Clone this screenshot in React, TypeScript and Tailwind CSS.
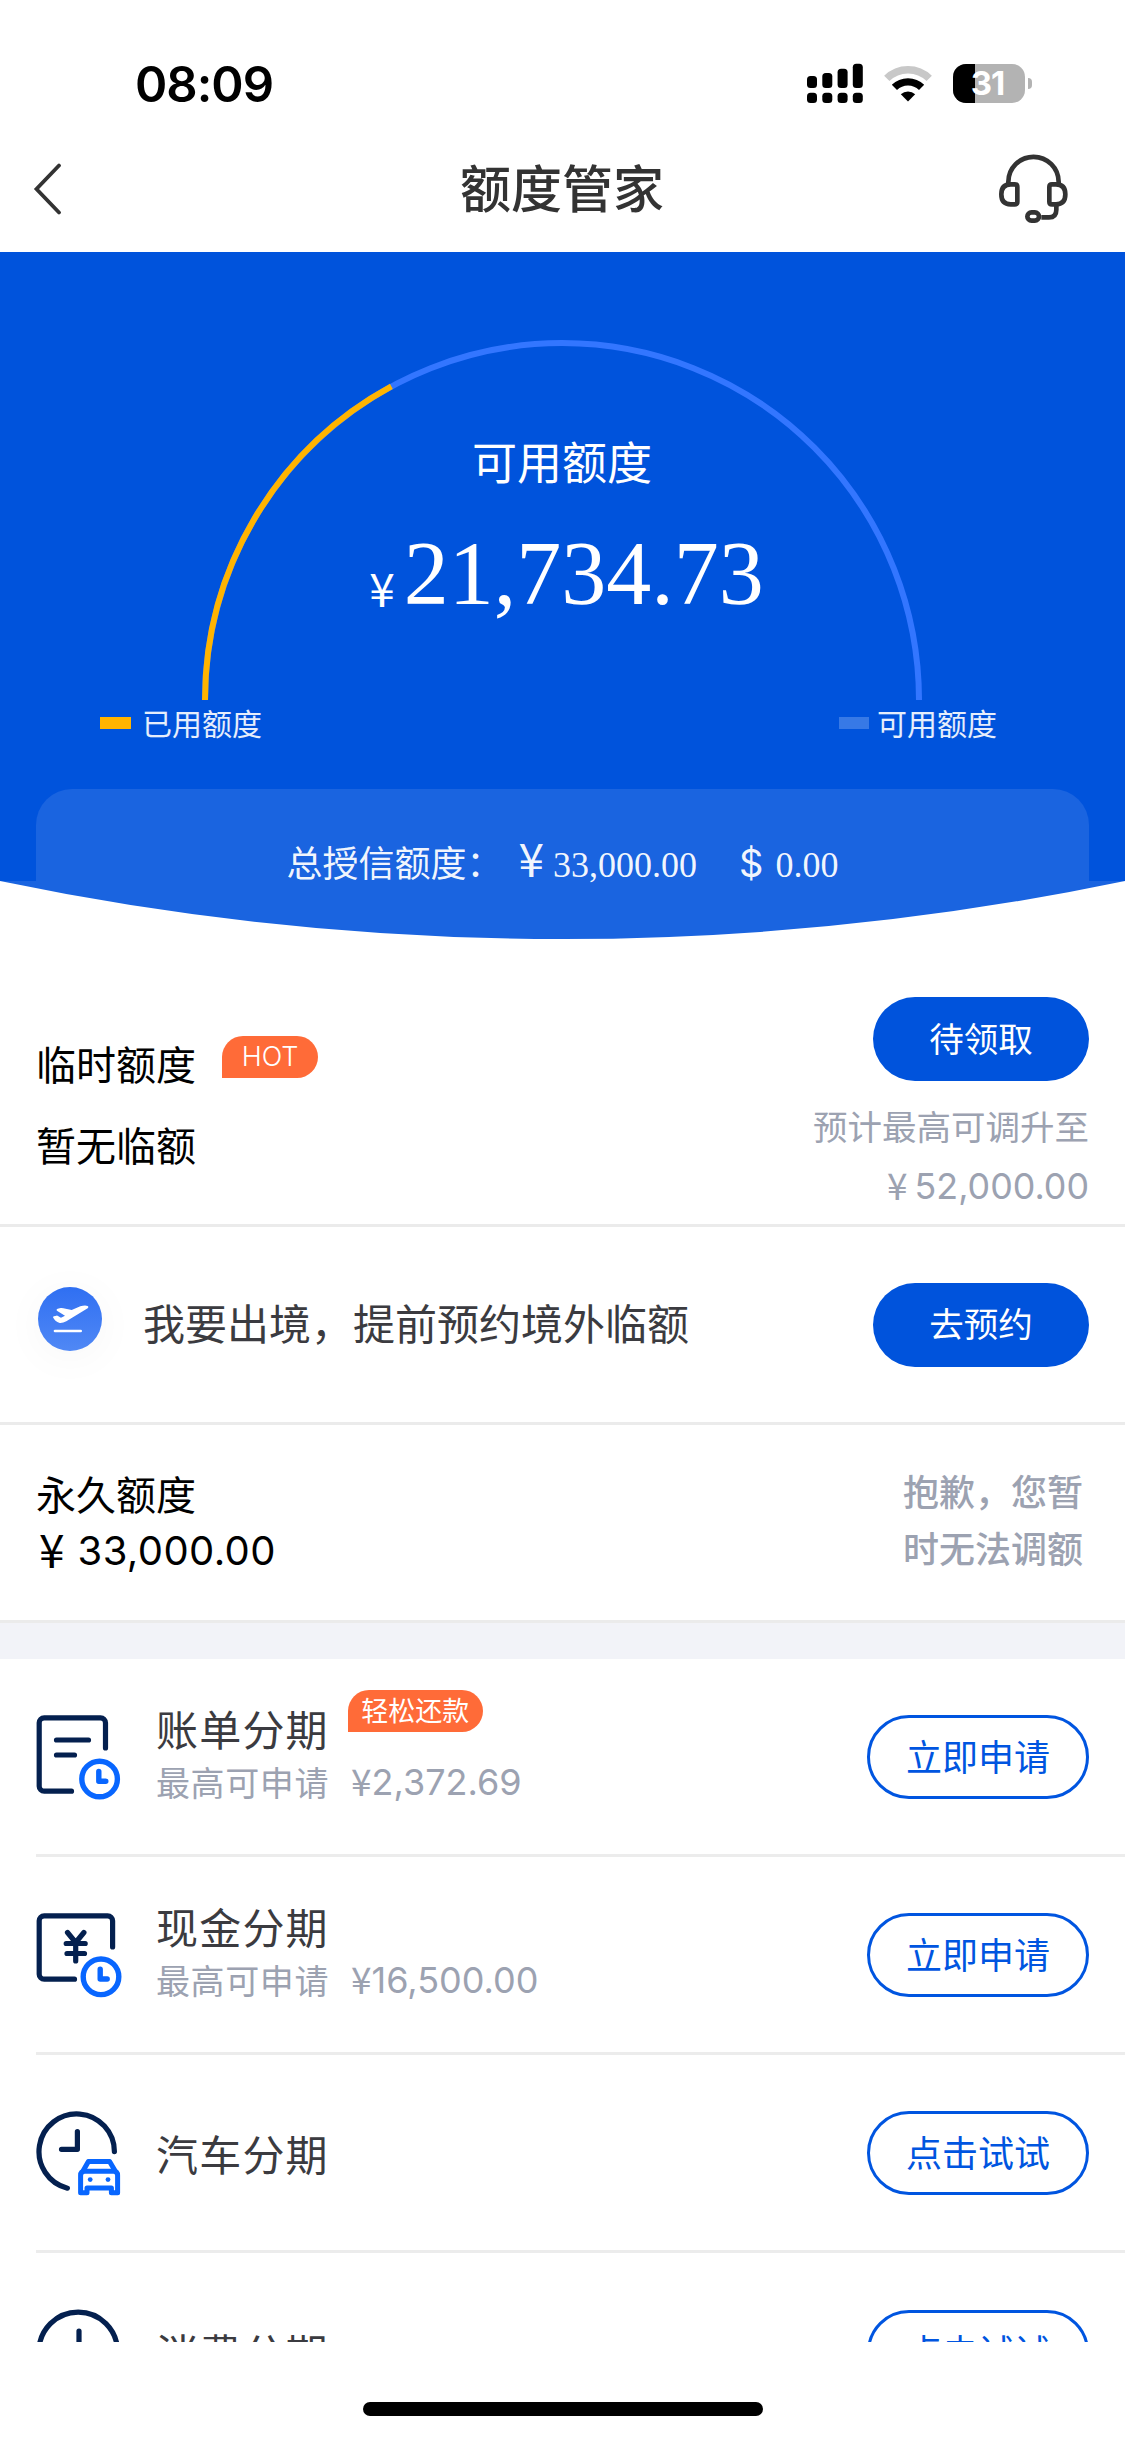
import type { ReactNode } from 'react'

interface Installment {
  id: string
  title: string
  amount?: string
  badge?: string
  action: string
  icon: ReactNode
}

const TOTAL_LIMIT = 33000
const AVAILABLE_LIMIT = 21734.73

const NAVY = '#04204f'
const BLUE = '#0866ff'

function SmallClock({ cx, cy }: { cx: number; cy: number }) {
  return (
    <g stroke={BLUE} strokeWidth="5.4">
      <circle cx={cx} cy={cy} r="17.8" />
      <path d={`M${cx - 0.8} ${cy - 7.5}v9.7h7`} />
    </g>
  )
}

function IconBase({ children }: { children: ReactNode }) {
  return (
    <svg
      className="h-[84px] w-[84px] shrink-0 overflow-visible"
      viewBox="0 0 84 84"
      fill="none"
      stroke={NAVY}
      strokeWidth="5.2"
      strokeLinecap="round"
      strokeLinejoin="round"
    >
      {children}
    </svg>
  )
}

function BillIcon() {
  return (
    <IconBase>
      <path d="M35.5 76.2H8.2a5 5 0 0 1-5-5V7.8a5 5 0 0 1 5-5h56.3a5 5 0 0 1 5 5V33" />
      <path d="M20.5 25h32M20.5 40h18" />
      <SmallClock cx={63.6} cy={64} />
    </IconBase>
  )
}

function CashIcon() {
  return (
    <IconBase>
      <path d="M38.5 66.2H8.2a5 5 0 0 1-5-5V7.8a5 5 0 0 1 5-5h63.4a5 5 0 0 1 5 5V34" />
      <path d="M31.5 19.5l8.2 10 8.2-10M39.7 30v18M30.2 30.5h19M31 40.5h17.5" />
      <SmallClock cx={65} cy={63.8} />
    </IconBase>
  )
}

function CarIcon() {
  return (
    <IconBase>
      <path d="M78.4 40.6A37.7 37.7 0 1 0 31.4 77.2" />
      <path d="M41.4 20.5v17.8H25.5" />
      <g stroke={BLUE} strokeWidth="5">
        <path d="M47 60l5.4-9.6h21.2L79.2 60" />
        <path d="M44.6 64.5q0-4.2 4-4.2h29q4 0 4 4.2v17.2h-6.2v-4.6H51v4.6h-6.4z" />
      </g>
      <circle cx="54.2" cy="68.6" r="2.4" fill={BLUE} stroke="none" />
      <circle cx="72" cy="68.6" r="2.4" fill={BLUE} stroke="none" />
    </IconBase>
  )
}

function SpendIcon() {
  return (
    <IconBase>
      <circle cx="42.2" cy="41.5" r="39.3" />
      <path d="M43 21v20h16" />
    </IconBase>
  )
}

const installments: Installment[] = [
  {
    id: 'bill',
    title: '账单分期',
    amount: '2,372.69',
    badge: '轻松还款',
    action: '立即申请',
    icon: <BillIcon />,
  },
  { id: 'cash', title: '现金分期', amount: '16,500.00', action: '立即申请', icon: <CashIcon /> },
  { id: 'car', title: '汽车分期', action: '点击试试', icon: <CarIcon /> },
  { id: 'spend', title: '消费分期', action: '点击试试', icon: <SpendIcon /> },
]

function StatusBar() {
  return (
    <div className="flex h-[126px] items-start justify-between pr-[93px] pl-[135px]">
      <div className="mt-[55px] font-['Inter'] text-[49px] leading-[60px] font-semibold tracking-[-1px] text-black">
        08:09
      </div>
      <div className="mt-[63px] flex h-[41px] items-center">
        {/* 信号 */}
        <svg className="h-[41px] w-[58px]" viewBox="0 0 58 41">
          <rect x="0" y="13" width="10" height="12" rx="3.5" />
          <rect x="15.3" y="10" width="10" height="15" rx="3.5" />
          <rect x="30.6" y="5.7" width="10" height="19.3" rx="3.5" />
          <rect x="45.8" y="0.8" width="10" height="24.2" rx="3.5" />
          <rect x="0" y="29.7" width="10" height="10.3" rx="3.5" />
          <rect x="15.3" y="29.7" width="10" height="10.3" rx="3.5" />
          <rect x="30.6" y="29.7" width="10" height="10.3" rx="3.5" />
          <rect x="45.8" y="29.7" width="10" height="10.3" rx="3.5" />
        </svg>
        {/* Wi-Fi */}
        <svg className="mr-px ml-[19px] h-[41px] w-12" viewBox="0 0 48 41" fill="none">
          <path d="M2.8 15.4a30.2 30.2 0 0 1 42.4 0" stroke="#c8c8c8" strokeWidth="7.6" />
          <path d="M10.4 24.4a19.4 19.4 0 0 1 27.2 0" stroke="#000" strokeWidth="7.4" />
          <path d="M24 38.5l-7.2-7.2a10.4 10.4 0 0 1 14.4 0z" fill="#000" />
        </svg>
        {/* 电池 */}
        <div className="ml-5 flex items-center gap-[3px]">
          <div className="relative flex h-[39px] w-[72px] items-center justify-center overflow-hidden rounded-[13px] bg-[#b3b3b3]">
            <div className="absolute inset-y-0 left-0 w-[22px] bg-black" />
            <span className="relative mr-[3px] font-['Inter'] text-[33px] leading-none font-bold tracking-[-1px] text-white">31</span>
          </div>
          <div className="h-[11px] w-1 rounded-r-full bg-[#b3b3b3]" />
        </div>
      </div>
    </div>
  )
}

function NavBar() {
  return (
    <div className="flex h-[126px] items-center pr-[55px] pl-8">
      <div className="flex-1">
        <svg className="h-[52px] w-[72px]" viewBox="0 0 72 52" fill="none" stroke="#333" strokeWidth="3.8">
          <path d="M27 2.5L4.5 26 27 49.5" strokeLinecap="round" />
        </svg>
      </div>
      <h1 className="-mt-[6px] mr-[-22px] text-[51px] leading-[60px] font-medium text-[#333]">额度管家</h1>
      <div className="flex flex-1 justify-end">
        <svg className="h-[70px] w-[72px]" viewBox="654 342 216 210" fill="none" stroke="#333" strokeWidth="14">
          <path d="M685 432V426a75 75 0 0 1 151 0v6" />
          <path d="M692 433h12q8 0 8 8v44q0 8-8 8h-12q-28 0-28-30t28-30z" />
          <path d="M828 433h-12q-8 0-8 8v44q0 8 8 8h12q28 0 28-30t-28-30z" />
          <path d="M829 493v16q0 23-22 23h-23" />
          <rect x="742" y="517" width="35" height="25" rx="12.5" />
        </svg>
      </div>
    </div>
  )
}

function Gauge() {
  const radius = 357
  const used = (TOTAL_LIMIT - AVAILABLE_LIMIT) / TOTAL_LIMIT
  const angle = Math.PI * used
  const endX = 360 - radius * Math.cos(angle)
  const endY = 360 - radius * Math.sin(angle)

  return (
    <div className="relative mt-[88px] mr-px flex h-[360px] w-[720px] flex-col items-center self-center text-white">
      <svg className="absolute inset-0" viewBox="0 0 720 360" fill="none" strokeWidth="6">
        <path d="M3 360A357 357 0 0 1 717 360" stroke="#3376ff" />
        <path d={`M3 360A357 357 0 0 1 ${endX} ${endY}`} stroke="#ffb400" />
      </svg>
      <div className="mt-[91px] text-[45px] leading-[60px]">可用额度</div>
      <div className="mt-[33px] ml-[9px] flex items-baseline">
        <span className="relative top-[3px] mr-[9px] text-[46px] leading-[100px]">¥</span>
        <span className="font-['Liberation_Serif'] text-[90px] leading-[100px]">21,734.73</span>
      </div>
    </div>
  )
}

function LimitHero() {
  return (
    <section className="flex flex-col bg-[#0053dc]">
      <Gauge />
      <div className="flex h-[89px] items-start justify-between pr-[128px] pl-[100px] text-[30px] leading-[45px] text-white/90">
        <div className="flex items-center">
          <span className="mr-[11px] h-3 w-[31px] bg-[#ffb400]" />
          已用额度
        </div>
        <div className="flex items-center">
          <span className="mr-2 h-3 w-[30px] bg-[#3779e6]" />
          可用额度
        </div>
      </div>
      <div className="relative z-10 mx-9 flex h-[92px] items-end justify-center rounded-t-[36px] bg-[#1a64e0]">
        <div className="-mb-[9px] flex items-baseline text-[36px] leading-[50px] text-white/95">
          <span>总授信额度：</span>
          <span className="ml-4 text-[46px]">¥</span>
          <span className="ml-[9px] font-['Liberation_Serif']">33,000.00</span>
          <span className="ml-[42px] font-['Inter'] text-[38px]">$</span>
          <span className="ml-3 font-['Liberation_Serif']">0.00</span>
        </div>
      </div>
      <svg className="h-[58px] w-full bg-white" viewBox="0 0 1125 58">
        <path d="M0 0H1125A2757 2757 0 0 1 0 0z" fill="#1a64e0" />
      </svg>
    </section>
  )
}

function PrimaryButton({ children }: { children: ReactNode }) {
  return (
    <button className="flex h-[84px] w-[216px] items-center justify-center rounded-full bg-[#0053dc] pb-1 text-[34.5px] text-white">
      {children}
    </button>
  )
}

function TemporaryLimit() {
  return (
    <section className="flex h-[288px] justify-between border-b-[3px] border-[#ebebeb] px-9">
      <div className="text-[40px] leading-[60px] text-black">
        <div className="mt-[94px] flex">
          临时额度
          <span className="mt-[3px] ml-[26px] flex h-[42px] w-24 items-center justify-center rounded-[21px] rounded-bl-none bg-[#ff6b38] pb-px font-['Inter'] text-[27px] leading-none font-light text-white">
            HOT
          </span>
        </div>
        <div className="mt-[21px]">暂无临额</div>
      </div>
      <div className="mt-[58px] flex flex-col items-end text-[34.5px] leading-[56px] text-[#9ca2b1]">
        <PrimaryButton>待领取</PrimaryButton>
        <div className="mt-[16px]">预计最高可调升至</div>
        <div className="mt-[3px] flex items-center">
          <span className="mr-[7px] mb-1 text-[37px]">¥</span>
          <span className="font-['Inter'] text-[35.8px]">52,000.00</span>
        </div>
      </div>
    </section>
  )
}

function AbroadEntry() {
  return (
    <section className="flex h-[198px] items-center border-b-[3px] border-[#ebebeb] px-9">
      <div className="mr-[41px] -mt-[12px] ml-[2px] h-16 w-16 rounded-full bg-gradient-to-b from-[#2f6ff2] to-[#5088f5] shadow-[0_6px_44px_rgba(0,0,0,0.04)]">
        <svg className="h-16 w-16" viewBox="27 36 192 192" fill="#fff">
          <path d="M75 124l7-2q3-1 5 1l6 4q3 2 6 0l9-5-23-14q-5-4 1-7l9-2q4-1 8 1l25 5 26-11q14-4 22-1 5 3 0 7-26 16-64 39-11 6-20 5-15-5-20-17-1-2 3-3z" />
          <rect x="74" y="164" width="85" height="8" rx="4" />
        </svg>
      </div>
      <div className="-mt-[7px] flex-1 text-[42px] text-[#3b3b40]">我要出境，提前预约境外临额</div>
      <PrimaryButton>去预约</PrimaryButton>
    </section>
  )
}

function PermanentLimit() {
  return (
    <section className="flex h-[198px] justify-between border-b-[3px] border-[#ebebeb] px-9">
      <div className="mt-[41px] text-[40px] leading-[55px] text-black">
        <div>永久额度</div>
        <div className="flex items-center">
          <span className="mb-1 ml-[3px] text-[46px]">¥</span>
          <span className="ml-[13px] font-['Inter'] tracking-[0.4px]">33,000.00</span>
        </div>
      </div>
      <div className="mt-[37px] w-[186px] text-[36px] leading-[57px] font-medium text-[#9ca2b1]">
        抱歉，您暂时无法调额
      </div>
    </section>
  )
}

function InstallmentRow({ item }: { item: Installment }) {
  return (
    <div className="flex h-[198px] shrink-0 items-center pr-9">
      {item.icon}
      <div className={item.amount ? 'mb-1 ml-9 flex-1' : 'ml-9 flex-1'}>
        <div className="flex text-[42px] leading-[54px] tracking-[1.2px] text-[#3b3b40]">
          {item.title}
          {item.badge && (
            <span className="-mt-[11px] ml-[19px] flex h-[42px] w-[135px] items-center justify-center rounded-[21px] rounded-bl-none bg-[#ff6b38] pb-0.5 text-[27px] leading-none tracking-normal text-white">
              {item.badge}
            </span>
          )}
        </div>
        {item.amount && (
          <div className="flex items-center text-[34px] leading-[50px] text-[#9ca2b1]">
            <span className="tracking-[0.6px]">最高可申请</span>
            <span className="mb-1 ml-[22px] text-[37px]">¥</span>
            <span className="mt-px font-['Inter'] text-[36px]">{item.amount}</span>
          </div>
        )}
      </div>
      <button className="flex h-[84px] w-[222px] items-center justify-center rounded-full border-[3px] border-[#0055e0] pb-1 text-[36px] text-[#0055e0]">
        {item.action}
      </button>
    </div>
  )
}

export default function App() {
  return (
    <div className="flex h-[2439px] w-[1125px] flex-col overflow-hidden bg-white font-['Noto_Sans_CJK_SC',sans-serif]">
      <StatusBar />
      <NavBar />
      <LimitHero />
      <TemporaryLimit />
      <AbroadEntry />
      <PermanentLimit />
      <div className="h-9 shrink-0 bg-[#f2f3f8]" />
      <div className="ml-9 flex h-[683px] shrink-0 flex-col divide-y-[3px] divide-[#ececec] overflow-hidden">
        {installments.map(item => (
          <InstallmentRow key={item.id} item={item} />
        ))}
      </div>
      <div className="mt-[60px] h-[14px] w-[400px] shrink-0 self-center rounded-full bg-black" />
    </div>
  )
}
